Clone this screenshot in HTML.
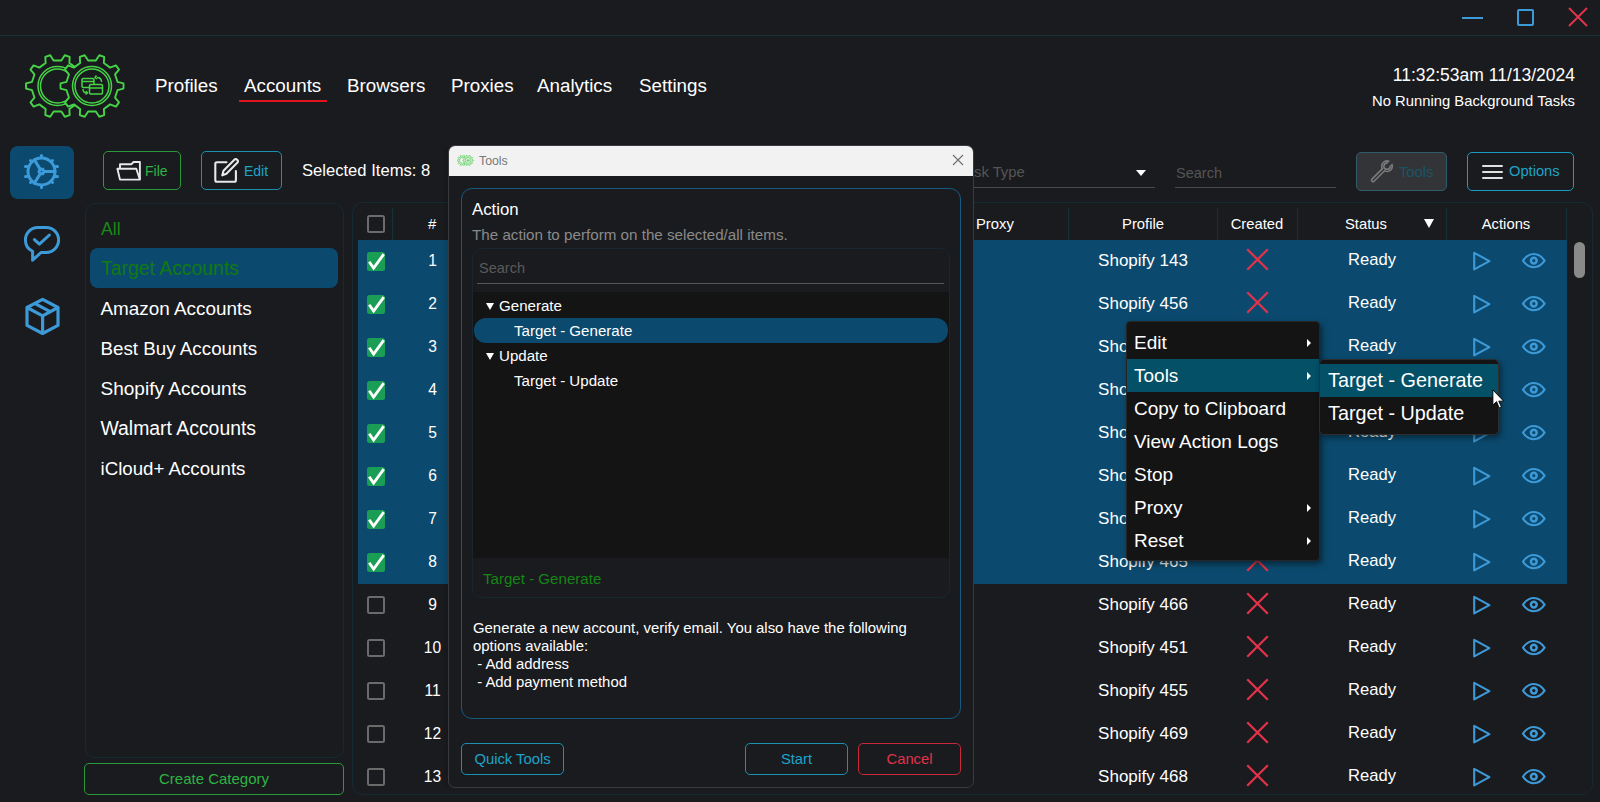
<!DOCTYPE html>
<html><head><meta charset="utf-8">
<style>
*{box-sizing:border-box;margin:0;padding:0}
html,body{width:1600px;height:802px;overflow:hidden;background:#1a1b1f;font-family:"Liberation Sans",sans-serif;color:#fff}
.a{position:absolute}
.t{position:absolute;white-space:nowrap;line-height:1}
.btn{position:absolute;border-radius:5px;border:1.5px solid}
</style></head><body>
<div class="a" style="left:0px;top:35px;width:1600px;height:1px;background:#17303c"></div>
<div class="a" style="left:1462px;top:16.5px;width:21px;height:2px;background:#3d9ad8"></div>
<div class="a" style="left:1517px;top:9px;width:17px;height:17px;border:2px solid #3d9ad8;border-radius:2px"></div>
<svg class="a" style="left:1568px;top:7px" width="20" height="20"><path d="M1 1L19 19M19 1L1 19" stroke="#e0334a" stroke-width="2"/></svg>
<svg class="a" style="left:20px;top:45px" width="115" height="80" viewBox="0 0 115 80">
<g stroke="#46d446" fill="none" stroke-width="1.9" stroke-linejoin="round">
<path d="M62.96 45.20 L68.99 43.58 L68.99 38.42 L62.96 36.80 L60.56 29.43 L64.50 24.57 L61.46 20.40 L55.63 22.64 L49.36 18.09 L49.68 11.84 L44.78 10.25 L41.38 15.49 L33.62 15.49 L30.22 10.25 L25.32 11.84 L25.64 18.09 L19.37 22.64 L13.54 20.40 L10.50 24.57 L14.44 29.43 L12.04 36.80 L6.01 38.42 L6.01 43.58 L12.04 45.20 L14.44 52.57 L10.50 57.43 L13.54 61.60 L19.37 59.36 L25.64 63.91 L25.32 70.16 L30.22 71.75 L33.62 66.51 L41.38 66.51 L44.78 71.75 L49.68 70.16 L49.36 63.91 L55.63 59.36 L61.46 61.60 L64.50 57.43 L60.56 52.57Z"/>
<circle cx="37.5" cy="41" r="19.5" stroke-width="1.5"/><circle cx="37.5" cy="41" r="17" stroke-width="1.5"/>
<path d="M97.46 45.20 L103.49 43.58 L103.49 38.42 L97.46 36.80 L95.06 29.43 L99.00 24.57 L95.96 20.40 L90.13 22.64 L83.86 18.09 L84.18 11.84 L79.28 10.25 L75.88 15.49 L68.12 15.49 L64.72 10.25 L59.82 11.84 L60.14 18.09 L53.87 22.64 L48.04 20.40 L45.00 24.57 L48.94 29.43 L46.54 36.80 L40.51 38.42 L40.51 43.58 L46.54 45.20 L48.94 52.57 L45.00 57.43 L48.04 61.60 L53.87 59.36 L60.14 63.91 L59.82 70.16 L64.72 71.75 L68.12 66.51 L75.88 66.51 L79.28 71.75 L84.18 70.16 L83.86 63.91 L90.13 59.36 L95.96 61.60 L99.00 57.43 L95.06 52.57Z" fill="#1a1b1f"/>
<circle cx="72" cy="41" r="19.5" stroke-width="1.5"/><circle cx="72" cy="41" r="17" stroke-width="1.5"/>
<g stroke-width="1.5">
<rect x="62" y="33.5" width="12" height="9" rx="1.2"/><path d="M62 36.5h12"/>
<rect x="69.5" y="39.5" width="13" height="9.5" rx="1.2" fill="#1a1b1f"/><path d="M69.5 43h13"/>
<path d="M77 32.5c2.5 0 4.5 1.5 4.5 4.5"/><path d="M76.5 30.5l-1.5 2 2 1.5"/>
<path d="M63 44c0 2.5 1.5 4 4 4"/><path d="M66 46l1.5 2-2 1.5"/>
</g></g></svg>
<div class="t" style="left:155px;top:76.59px;font-size:18.8px;color:#fff;">Profiles</div>
<div class="t" style="left:244px;top:76.59px;font-size:18.8px;color:#fff;">Accounts</div>
<div class="t" style="left:347px;top:76.59px;font-size:18.8px;color:#fff;">Browsers</div>
<div class="t" style="left:451px;top:76.59px;font-size:18.8px;color:#fff;">Proxies</div>
<div class="t" style="left:537px;top:76.59px;font-size:18.8px;color:#fff;">Analytics</div>
<div class="t" style="left:639px;top:76.59px;font-size:18.8px;color:#fff;">Settings</div>
<div class="a" style="left:239px;top:100px;width:88px;height:2px;background:#e0141e"></div>
<div class="t" style="right:25px;top:67.39px;font-size:17.5px;color:#fff;">11:32:53am 11/13/2024</div>
<div class="t" style="right:25px;top:93.67px;font-size:14.8px;color:#fff;">No Running Background Tasks</div>
<div class="a" style="left:10px;top:146px;width:64px;height:53px;background:#0b4a6e;border-radius:8px"></div>
<svg class="a" style="left:21px;top:151px" width="42" height="42" viewBox="0 0 42 42">
 <g stroke="#3d9ad8" stroke-width="3" fill="none" stroke-linecap="round">
  <circle cx="20.5" cy="20.5" r="13.5"/>
  <path d="M20.5 4.5v2M20.5 34.5v2M9.5 9.5l1 1M31.5 9.5l-1 1M9.5 31.5l1-1M31.5 31.5l-1-1M4.5 15.5h2M4.5 25.5h2M36.5 15.5h-2M36.5 25.5h-2"/>
  <path d="M23 20.5h11M19.3 18.4l-6-9.7M19.3 22.6l-6 9.7"/>
  <path d="M18 20.5l1.3-2.2h2.5l1.3 2.2-1.3 2.2h-2.5z"/>
 </g></svg>
<svg class="a" style="left:22px;top:224px" width="40" height="40" viewBox="0 0 40 40">
 <g stroke="#3d9ad8" stroke-width="3" fill="none" stroke-linecap="round" stroke-linejoin="round">
  <path d="M19 28.5H24A12.5 12.5 0 0 0 36.6 16V15.9A12.4 12.4 0 0 0 24.2 3.5H15.8A12.4 12.4 0 0 0 3.4 15.9V16A12.5 12.5 0 0 0 10.6 27.3V36.2Z"/>
  <path d="M12.4 15.6l5 4.6 10-9.2"/>
 </g></svg>
<svg class="a" style="left:22px;top:296px" width="40" height="40" viewBox="0 0 40 40">
 <g stroke="#3d9ad8" stroke-width="3.2" fill="none" stroke-linejoin="round">
  <path d="M20.6 3.4L36 11.5V29.4L20.6 37.5 5 29.4V11.5z"/>
  <path d="M5 11.5L20.6 19.8 36 11.5M20.6 19.8V37.5M12.6 7.4l15.6 8.2"/>
 </g></svg>
<div class="btn" style="left:103px;top:151px;width:78px;height:39px;border-color:#2a9a3a"></div>
<svg class="a" style="left:115px;top:159px" width="28" height="24" viewBox="0 0 28 24">
 <g stroke="#e8e8e8" stroke-width="1.9" fill="none" stroke-linejoin="round">
  <path d="M5 9.5V5.2h11.5L18.5 3h6.4v17.6"/><path d="M2.4 9.7h18.9l3.6 10.9H5z"/>
 </g></svg>
<div class="t" style="left:145px;top:164.35px;font-size:14px;color:#2fb344;">File</div>
<div class="btn" style="left:201px;top:151px;width:81px;height:39px;border-color:#1a8fb0"></div>
<svg class="a" style="left:213px;top:157px" width="28" height="28" viewBox="0 0 28 28">
 <g stroke="#e8e8e8" stroke-width="2.1" fill="none" stroke-linejoin="round" stroke-linecap="round">
  <path d="M13.5 5.2H3.8a1.5 1.5 0 0 0-1.5 1.5v16.6a1.5 1.5 0 0 0 1.5 1.5h17.6a1.5 1.5 0 0 0 1.5-1.5V14"/><path d="M9.3 18.3l1.2-4.6L21.6 2.6a1.6 1.6 0 0 1 2.3 0l.6.6a1.6 1.6 0 0 1 0 2.3L13.4 16.7z"/>
 </g></svg>
<div class="t" style="left:244px;top:164.35px;font-size:14px;color:#1fa3c9;">Edit</div>
<div class="t" style="left:302px;top:162.75px;font-size:16.6px;color:#fff;">Selected Items: 8</div>
<div class="t" style="left:974px;top:165.47px;font-size:14.8px;color:#555555;">sk Type</div>
<div class="a" style="left:1136px;top:170px;width:0px;height:0px;border-top:6px solid #fff;border-left:5px solid transparent;border-right:5px solid transparent"></div>
<div class="a" style="left:955px;top:187px;width:200px;height:1px;background:#4a4a4a"></div>
<div class="t" style="left:1176px;top:165.73px;font-size:14.5px;color:#555555;">Search</div>
<div class="a" style="left:1175px;top:187px;width:161px;height:1px;background:#4a4a4a"></div>
<div class="btn" style="left:1356px;top:152px;width:91px;height:39px;background:#333438;border-color:#2f5c68"></div>
<svg class="a" style="left:1368px;top:158px" width="28" height="28" viewBox="0 0 28 28">
 <defs>
  <mask id="wo"><rect width="28" height="28" fill="#000"/><circle cx="19" cy="8.2" r="6.1" fill="#fff"/><path d="M19 8.2L5 22.2" stroke="#fff" stroke-width="4.6" stroke-linecap="round"/><circle cx="19" cy="8.2" r="2.3" fill="#000"/><path d="M19 8.2L26 1.2" stroke="#000" stroke-width="3.4"/></mask>
  <mask id="wi"><rect width="28" height="28" fill="#000"/><circle cx="19" cy="8.2" r="4.5" fill="#fff"/><path d="M19 8.2L5 22.2" stroke="#fff" stroke-width="1.4" stroke-linecap="round"/><circle cx="19" cy="8.2" r="3.9" fill="#000"/><path d="M19 8.2L26 1.2" stroke="#000" stroke-width="6.6"/></mask>
 </defs>
 <rect width="28" height="28" fill="#7a7a7a" mask="url(#wo)"/>
 <rect width="28" height="28" fill="#333438" mask="url(#wi)"/>
</svg>
<div class="t" style="left:1399px;top:165.16px;font-size:14.7px;color:#1a5566;">Tools</div>
<div class="btn" style="left:1467px;top:152px;width:107px;height:39px;border-color:#1a9bbf"></div>
<div class="a" style="left:1482px;top:164.5px;width:21px;height:2px;background:#e0e0e0;border-radius:1px"></div>
<div class="a" style="left:1482px;top:170.7px;width:21px;height:2px;background:#e0e0e0;border-radius:1px"></div>
<div class="a" style="left:1482px;top:177px;width:21px;height:2px;background:#e0e0e0;border-radius:1px"></div>
<div class="t" style="left:1509px;top:164.36px;font-size:14.7px;color:#1fa3c9;">Options</div>
<div class="a" style="left:85px;top:203px;width:259px;height:555px;border:1px solid #152a33;border-radius:10px"></div>
<div class="t" style="left:101px;top:220.60px;font-size:17.6px;color:#188818;">All</div>
<div class="a" style="left:90px;top:248px;width:248px;height:40px;background:#0b4a6e;border-radius:8px"></div>
<div class="t" style="left:101px;top:259.08px;font-size:19.4px;color:#117a11;">Target Accounts</div>
<div class="t" style="left:100.5px;top:299.50px;font-size:18.9px;color:#fff;">Amazon Accounts</div>
<div class="t" style="left:100.5px;top:339.59px;font-size:18.8px;color:#fff;">Best Buy Accounts</div>
<div class="t" style="left:100.5px;top:379.37px;font-size:19.05px;color:#fff;">Shopify Accounts</div>
<div class="t" style="left:100.5px;top:419.08px;font-size:19.4px;color:#fff;">Walmart Accounts</div>
<div class="t" style="left:100.5px;top:459.67px;font-size:18.7px;color:#fff;">iCloud+ Accounts</div>
<div class="btn" style="left:84px;top:763px;width:260px;height:32px;border-color:#2a9a3a"></div>
<div class="t" style="left:84px;width:260px;text-align:center;top:770.70px;font-size:15px;color:#2fb344;">Create Category</div>
<div class="a" style="left:352px;top:202px;width:1241px;height:593px;border:1px solid #152a33;border-radius:11px"></div>
<div class="a" style="left:367px;top:215px;width:18px;height:17.5px;border-radius:2.5px;border:2px solid #6b6b6b"></div>
<div class="a" style="left:391.7px;top:208px;width:1.6px;height:32px;background:#14303b"></div>
<div class="a" style="left:1067.7px;top:208px;width:1.6px;height:32px;background:#14303b"></div>
<div class="a" style="left:1216.7px;top:208px;width:1.6px;height:32px;background:#14303b"></div>
<div class="a" style="left:1296.7px;top:208px;width:1.6px;height:32px;background:#14303b"></div>
<div class="a" style="left:1445.7px;top:208px;width:1.6px;height:32px;background:#14303b"></div>
<div class="a" style="left:1565.7px;top:208px;width:1.6px;height:32px;background:#14303b"></div>
<div class="t" style="left:428px;top:217.07px;font-size:14.8px;color:#fff;">#</div>
<div class="t" style="left:976px;top:217.07px;font-size:14.8px;color:#fff;">Proxy</div>
<div class="t" style="left:1068px;width:150px;text-align:center;top:217.07px;font-size:14.8px;color:#fff;">Profile</div>
<div class="t" style="left:1217px;width:80px;text-align:center;top:217.07px;font-size:14.8px;color:#fff;">Created</div>
<div class="t" style="left:1345px;top:217.07px;font-size:14.8px;color:#fff;">Status</div>
<div class="a" style="left:1424px;top:219px;width:0px;height:0px;border-top:9px solid #fff;border-left:5.5px solid transparent;border-right:5.5px solid transparent"></div>
<div class="t" style="left:1446px;width:120px;text-align:center;top:217.07px;font-size:14.8px;color:#fff;">Actions</div>
<div class="a" style="left:1574px;top:242px;width:11px;height:36px;background:#8a8a8a;border-radius:6px"></div>
<div class="a" style="left:358px;top:240px;width:1209px;height:43px;background:#0b4a6e"></div>
<div class="a" style="left:367px;top:252px;width:18px;height:19px;border-radius:2.5px;background:#1a9e55"><svg width="18" height="19" viewBox="0 0 18 19" style="position:absolute;left:0;top:0"><path d="M2.2 9.8l4.4 6.2L16.8 2.2" stroke="#fff" stroke-width="2.8" fill="none"/></svg></div>
<div class="t" style="left:402.5px;width:60px;text-align:center;top:253.29px;font-size:15.6px;color:#fff;">1</div>
<div class="t" style="left:1068px;width:150px;text-align:center;top:252.01px;font-size:17px;color:#fff;">Shopify 143</div>
<svg class="a" style="left:1246px;top:248px" width="23" height="23"><path d="M1.2 1.2L21.8 21.8M21.8 1.2L1.2 21.8" stroke="#e0334a" stroke-width="2.3"/></svg>
<div class="t" style="left:1348px;top:252.35px;font-size:16.6px;color:#fff;">Ready</div>
<svg class="a" style="left:1472px;top:250.5px" width="20" height="20" viewBox="0 0 20 20"><path d="M2.2 1.8v16.6L17.4 10.1z" stroke="#3d9ad8" stroke-width="2.1" fill="none" stroke-linejoin="round"/></svg>
<svg class="a" style="left:1521px;top:252px" width="26" height="18" viewBox="0 0 26 18"><path d="M2 8.6C5 4.2 8.8 2 12.8 2S20.6 4.2 23.6 8.6C20.6 13 16.8 15.2 12.8 15.2S5 13 2 8.6z" stroke="#3d9ad8" stroke-width="2.1" fill="none" stroke-linejoin="round"/><circle cx="12.8" cy="8.6" r="2.9" stroke="#3d9ad8" stroke-width="2.5" fill="none"/></svg>
<div class="a" style="left:358px;top:283px;width:1209px;height:43px;background:#0b4a6e"></div>
<div class="a" style="left:367px;top:295px;width:18px;height:19px;border-radius:2.5px;background:#1a9e55"><svg width="18" height="19" viewBox="0 0 18 19" style="position:absolute;left:0;top:0"><path d="M2.2 9.8l4.4 6.2L16.8 2.2" stroke="#fff" stroke-width="2.8" fill="none"/></svg></div>
<div class="t" style="left:402.5px;width:60px;text-align:center;top:296.29px;font-size:15.6px;color:#fff;">2</div>
<div class="t" style="left:1068px;width:150px;text-align:center;top:295.01px;font-size:17px;color:#fff;">Shopify 456</div>
<svg class="a" style="left:1246px;top:291px" width="23" height="23"><path d="M1.2 1.2L21.8 21.8M21.8 1.2L1.2 21.8" stroke="#e0334a" stroke-width="2.3"/></svg>
<div class="t" style="left:1348px;top:295.35px;font-size:16.6px;color:#fff;">Ready</div>
<svg class="a" style="left:1472px;top:293.5px" width="20" height="20" viewBox="0 0 20 20"><path d="M2.2 1.8v16.6L17.4 10.1z" stroke="#3d9ad8" stroke-width="2.1" fill="none" stroke-linejoin="round"/></svg>
<svg class="a" style="left:1521px;top:295px" width="26" height="18" viewBox="0 0 26 18"><path d="M2 8.6C5 4.2 8.8 2 12.8 2S20.6 4.2 23.6 8.6C20.6 13 16.8 15.2 12.8 15.2S5 13 2 8.6z" stroke="#3d9ad8" stroke-width="2.1" fill="none" stroke-linejoin="round"/><circle cx="12.8" cy="8.6" r="2.9" stroke="#3d9ad8" stroke-width="2.5" fill="none"/></svg>
<div class="a" style="left:358px;top:326px;width:1209px;height:43px;background:#0b4a6e"></div>
<div class="a" style="left:367px;top:338px;width:18px;height:19px;border-radius:2.5px;background:#1a9e55"><svg width="18" height="19" viewBox="0 0 18 19" style="position:absolute;left:0;top:0"><path d="M2.2 9.8l4.4 6.2L16.8 2.2" stroke="#fff" stroke-width="2.8" fill="none"/></svg></div>
<div class="t" style="left:402.5px;width:60px;text-align:center;top:339.29px;font-size:15.6px;color:#fff;">3</div>
<div class="t" style="left:1068px;width:150px;text-align:center;top:338.01px;font-size:17px;color:#fff;">Shopify 458</div>
<svg class="a" style="left:1246px;top:334px" width="23" height="23"><path d="M1.2 1.2L21.8 21.8M21.8 1.2L1.2 21.8" stroke="#e0334a" stroke-width="2.3"/></svg>
<div class="t" style="left:1348px;top:338.35px;font-size:16.6px;color:#fff;">Ready</div>
<svg class="a" style="left:1472px;top:336.5px" width="20" height="20" viewBox="0 0 20 20"><path d="M2.2 1.8v16.6L17.4 10.1z" stroke="#3d9ad8" stroke-width="2.1" fill="none" stroke-linejoin="round"/></svg>
<svg class="a" style="left:1521px;top:338px" width="26" height="18" viewBox="0 0 26 18"><path d="M2 8.6C5 4.2 8.8 2 12.8 2S20.6 4.2 23.6 8.6C20.6 13 16.8 15.2 12.8 15.2S5 13 2 8.6z" stroke="#3d9ad8" stroke-width="2.1" fill="none" stroke-linejoin="round"/><circle cx="12.8" cy="8.6" r="2.9" stroke="#3d9ad8" stroke-width="2.5" fill="none"/></svg>
<div class="a" style="left:358px;top:369px;width:1209px;height:43px;background:#0b4a6e"></div>
<div class="a" style="left:367px;top:381px;width:18px;height:19px;border-radius:2.5px;background:#1a9e55"><svg width="18" height="19" viewBox="0 0 18 19" style="position:absolute;left:0;top:0"><path d="M2.2 9.8l4.4 6.2L16.8 2.2" stroke="#fff" stroke-width="2.8" fill="none"/></svg></div>
<div class="t" style="left:402.5px;width:60px;text-align:center;top:382.29px;font-size:15.6px;color:#fff;">4</div>
<div class="t" style="left:1068px;width:150px;text-align:center;top:381.01px;font-size:17px;color:#fff;">Shopify 461</div>
<svg class="a" style="left:1246px;top:377px" width="23" height="23"><path d="M1.2 1.2L21.8 21.8M21.8 1.2L1.2 21.8" stroke="#e0334a" stroke-width="2.3"/></svg>
<div class="t" style="left:1348px;top:381.35px;font-size:16.6px;color:#fff;">Ready</div>
<svg class="a" style="left:1472px;top:379.5px" width="20" height="20" viewBox="0 0 20 20"><path d="M2.2 1.8v16.6L17.4 10.1z" stroke="#3d9ad8" stroke-width="2.1" fill="none" stroke-linejoin="round"/></svg>
<svg class="a" style="left:1521px;top:381px" width="26" height="18" viewBox="0 0 26 18"><path d="M2 8.6C5 4.2 8.8 2 12.8 2S20.6 4.2 23.6 8.6C20.6 13 16.8 15.2 12.8 15.2S5 13 2 8.6z" stroke="#3d9ad8" stroke-width="2.1" fill="none" stroke-linejoin="round"/><circle cx="12.8" cy="8.6" r="2.9" stroke="#3d9ad8" stroke-width="2.5" fill="none"/></svg>
<div class="a" style="left:358px;top:412px;width:1209px;height:43px;background:#0b4a6e"></div>
<div class="a" style="left:367px;top:424px;width:18px;height:19px;border-radius:2.5px;background:#1a9e55"><svg width="18" height="19" viewBox="0 0 18 19" style="position:absolute;left:0;top:0"><path d="M2.2 9.8l4.4 6.2L16.8 2.2" stroke="#fff" stroke-width="2.8" fill="none"/></svg></div>
<div class="t" style="left:402.5px;width:60px;text-align:center;top:425.29px;font-size:15.6px;color:#fff;">5</div>
<div class="t" style="left:1068px;width:150px;text-align:center;top:424.01px;font-size:17px;color:#fff;">Shopify 462</div>
<svg class="a" style="left:1246px;top:420px" width="23" height="23"><path d="M1.2 1.2L21.8 21.8M21.8 1.2L1.2 21.8" stroke="#e0334a" stroke-width="2.3"/></svg>
<div class="t" style="left:1348px;top:424.35px;font-size:16.6px;color:#fff;">Ready</div>
<svg class="a" style="left:1472px;top:422.5px" width="20" height="20" viewBox="0 0 20 20"><path d="M2.2 1.8v16.6L17.4 10.1z" stroke="#3d9ad8" stroke-width="2.1" fill="none" stroke-linejoin="round"/></svg>
<svg class="a" style="left:1521px;top:424px" width="26" height="18" viewBox="0 0 26 18"><path d="M2 8.6C5 4.2 8.8 2 12.8 2S20.6 4.2 23.6 8.6C20.6 13 16.8 15.2 12.8 15.2S5 13 2 8.6z" stroke="#3d9ad8" stroke-width="2.1" fill="none" stroke-linejoin="round"/><circle cx="12.8" cy="8.6" r="2.9" stroke="#3d9ad8" stroke-width="2.5" fill="none"/></svg>
<div class="a" style="left:358px;top:455px;width:1209px;height:43px;background:#0b4a6e"></div>
<div class="a" style="left:367px;top:467px;width:18px;height:19px;border-radius:2.5px;background:#1a9e55"><svg width="18" height="19" viewBox="0 0 18 19" style="position:absolute;left:0;top:0"><path d="M2.2 9.8l4.4 6.2L16.8 2.2" stroke="#fff" stroke-width="2.8" fill="none"/></svg></div>
<div class="t" style="left:402.5px;width:60px;text-align:center;top:468.29px;font-size:15.6px;color:#fff;">6</div>
<div class="t" style="left:1068px;width:150px;text-align:center;top:467.01px;font-size:17px;color:#fff;">Shopify 463</div>
<svg class="a" style="left:1246px;top:463px" width="23" height="23"><path d="M1.2 1.2L21.8 21.8M21.8 1.2L1.2 21.8" stroke="#e0334a" stroke-width="2.3"/></svg>
<div class="t" style="left:1348px;top:467.35px;font-size:16.6px;color:#fff;">Ready</div>
<svg class="a" style="left:1472px;top:465.5px" width="20" height="20" viewBox="0 0 20 20"><path d="M2.2 1.8v16.6L17.4 10.1z" stroke="#3d9ad8" stroke-width="2.1" fill="none" stroke-linejoin="round"/></svg>
<svg class="a" style="left:1521px;top:467px" width="26" height="18" viewBox="0 0 26 18"><path d="M2 8.6C5 4.2 8.8 2 12.8 2S20.6 4.2 23.6 8.6C20.6 13 16.8 15.2 12.8 15.2S5 13 2 8.6z" stroke="#3d9ad8" stroke-width="2.1" fill="none" stroke-linejoin="round"/><circle cx="12.8" cy="8.6" r="2.9" stroke="#3d9ad8" stroke-width="2.5" fill="none"/></svg>
<div class="a" style="left:358px;top:498px;width:1209px;height:43px;background:#0b4a6e"></div>
<div class="a" style="left:367px;top:510px;width:18px;height:19px;border-radius:2.5px;background:#1a9e55"><svg width="18" height="19" viewBox="0 0 18 19" style="position:absolute;left:0;top:0"><path d="M2.2 9.8l4.4 6.2L16.8 2.2" stroke="#fff" stroke-width="2.8" fill="none"/></svg></div>
<div class="t" style="left:402.5px;width:60px;text-align:center;top:511.29px;font-size:15.6px;color:#fff;">7</div>
<div class="t" style="left:1068px;width:150px;text-align:center;top:510.01px;font-size:17px;color:#fff;">Shopify 464</div>
<svg class="a" style="left:1246px;top:506px" width="23" height="23"><path d="M1.2 1.2L21.8 21.8M21.8 1.2L1.2 21.8" stroke="#e0334a" stroke-width="2.3"/></svg>
<div class="t" style="left:1348px;top:510.35px;font-size:16.6px;color:#fff;">Ready</div>
<svg class="a" style="left:1472px;top:508.5px" width="20" height="20" viewBox="0 0 20 20"><path d="M2.2 1.8v16.6L17.4 10.1z" stroke="#3d9ad8" stroke-width="2.1" fill="none" stroke-linejoin="round"/></svg>
<svg class="a" style="left:1521px;top:510px" width="26" height="18" viewBox="0 0 26 18"><path d="M2 8.6C5 4.2 8.8 2 12.8 2S20.6 4.2 23.6 8.6C20.6 13 16.8 15.2 12.8 15.2S5 13 2 8.6z" stroke="#3d9ad8" stroke-width="2.1" fill="none" stroke-linejoin="round"/><circle cx="12.8" cy="8.6" r="2.9" stroke="#3d9ad8" stroke-width="2.5" fill="none"/></svg>
<div class="a" style="left:358px;top:541px;width:1209px;height:43px;background:#0b4a6e"></div>
<div class="a" style="left:367px;top:553px;width:18px;height:19px;border-radius:2.5px;background:#1a9e55"><svg width="18" height="19" viewBox="0 0 18 19" style="position:absolute;left:0;top:0"><path d="M2.2 9.8l4.4 6.2L16.8 2.2" stroke="#fff" stroke-width="2.8" fill="none"/></svg></div>
<div class="t" style="left:402.5px;width:60px;text-align:center;top:554.29px;font-size:15.6px;color:#fff;">8</div>
<div class="t" style="left:1068px;width:150px;text-align:center;top:553.01px;font-size:17px;color:#fff;">Shopify 465</div>
<svg class="a" style="left:1246px;top:549px" width="23" height="23"><path d="M1.2 1.2L21.8 21.8M21.8 1.2L1.2 21.8" stroke="#e0334a" stroke-width="2.3"/></svg>
<div class="t" style="left:1348px;top:553.35px;font-size:16.6px;color:#fff;">Ready</div>
<svg class="a" style="left:1472px;top:551.5px" width="20" height="20" viewBox="0 0 20 20"><path d="M2.2 1.8v16.6L17.4 10.1z" stroke="#3d9ad8" stroke-width="2.1" fill="none" stroke-linejoin="round"/></svg>
<svg class="a" style="left:1521px;top:553px" width="26" height="18" viewBox="0 0 26 18"><path d="M2 8.6C5 4.2 8.8 2 12.8 2S20.6 4.2 23.6 8.6C20.6 13 16.8 15.2 12.8 15.2S5 13 2 8.6z" stroke="#3d9ad8" stroke-width="2.1" fill="none" stroke-linejoin="round"/><circle cx="12.8" cy="8.6" r="2.9" stroke="#3d9ad8" stroke-width="2.5" fill="none"/></svg>
<div class="a" style="left:367px;top:596px;width:18px;height:18px;border-radius:2.5px;border:2px solid #6b6b6b"></div>
<div class="t" style="left:402.5px;width:60px;text-align:center;top:597.29px;font-size:15.6px;color:#fff;">9</div>
<div class="t" style="left:1068px;width:150px;text-align:center;top:596.01px;font-size:17px;color:#fff;">Shopify 466</div>
<svg class="a" style="left:1246px;top:592px" width="23" height="23"><path d="M1.2 1.2L21.8 21.8M21.8 1.2L1.2 21.8" stroke="#e0334a" stroke-width="2.3"/></svg>
<div class="t" style="left:1348px;top:596.35px;font-size:16.6px;color:#fff;">Ready</div>
<svg class="a" style="left:1472px;top:594.5px" width="20" height="20" viewBox="0 0 20 20"><path d="M2.2 1.8v16.6L17.4 10.1z" stroke="#3d9ad8" stroke-width="2.1" fill="none" stroke-linejoin="round"/></svg>
<svg class="a" style="left:1521px;top:596px" width="26" height="18" viewBox="0 0 26 18"><path d="M2 8.6C5 4.2 8.8 2 12.8 2S20.6 4.2 23.6 8.6C20.6 13 16.8 15.2 12.8 15.2S5 13 2 8.6z" stroke="#3d9ad8" stroke-width="2.1" fill="none" stroke-linejoin="round"/><circle cx="12.8" cy="8.6" r="2.9" stroke="#3d9ad8" stroke-width="2.5" fill="none"/></svg>
<div class="a" style="left:367px;top:639px;width:18px;height:18px;border-radius:2.5px;border:2px solid #6b6b6b"></div>
<div class="t" style="left:402.5px;width:60px;text-align:center;top:640.29px;font-size:15.6px;color:#fff;">10</div>
<div class="t" style="left:1068px;width:150px;text-align:center;top:639.01px;font-size:17px;color:#fff;">Shopify 451</div>
<svg class="a" style="left:1246px;top:635px" width="23" height="23"><path d="M1.2 1.2L21.8 21.8M21.8 1.2L1.2 21.8" stroke="#e0334a" stroke-width="2.3"/></svg>
<div class="t" style="left:1348px;top:639.35px;font-size:16.6px;color:#fff;">Ready</div>
<svg class="a" style="left:1472px;top:637.5px" width="20" height="20" viewBox="0 0 20 20"><path d="M2.2 1.8v16.6L17.4 10.1z" stroke="#3d9ad8" stroke-width="2.1" fill="none" stroke-linejoin="round"/></svg>
<svg class="a" style="left:1521px;top:639px" width="26" height="18" viewBox="0 0 26 18"><path d="M2 8.6C5 4.2 8.8 2 12.8 2S20.6 4.2 23.6 8.6C20.6 13 16.8 15.2 12.8 15.2S5 13 2 8.6z" stroke="#3d9ad8" stroke-width="2.1" fill="none" stroke-linejoin="round"/><circle cx="12.8" cy="8.6" r="2.9" stroke="#3d9ad8" stroke-width="2.5" fill="none"/></svg>
<div class="a" style="left:367px;top:682px;width:18px;height:18px;border-radius:2.5px;border:2px solid #6b6b6b"></div>
<div class="t" style="left:402.5px;width:60px;text-align:center;top:683.29px;font-size:15.6px;color:#fff;">11</div>
<div class="t" style="left:1068px;width:150px;text-align:center;top:682.01px;font-size:17px;color:#fff;">Shopify 455</div>
<svg class="a" style="left:1246px;top:678px" width="23" height="23"><path d="M1.2 1.2L21.8 21.8M21.8 1.2L1.2 21.8" stroke="#e0334a" stroke-width="2.3"/></svg>
<div class="t" style="left:1348px;top:682.35px;font-size:16.6px;color:#fff;">Ready</div>
<svg class="a" style="left:1472px;top:680.5px" width="20" height="20" viewBox="0 0 20 20"><path d="M2.2 1.8v16.6L17.4 10.1z" stroke="#3d9ad8" stroke-width="2.1" fill="none" stroke-linejoin="round"/></svg>
<svg class="a" style="left:1521px;top:682px" width="26" height="18" viewBox="0 0 26 18"><path d="M2 8.6C5 4.2 8.8 2 12.8 2S20.6 4.2 23.6 8.6C20.6 13 16.8 15.2 12.8 15.2S5 13 2 8.6z" stroke="#3d9ad8" stroke-width="2.1" fill="none" stroke-linejoin="round"/><circle cx="12.8" cy="8.6" r="2.9" stroke="#3d9ad8" stroke-width="2.5" fill="none"/></svg>
<div class="a" style="left:367px;top:725px;width:18px;height:18px;border-radius:2.5px;border:2px solid #6b6b6b"></div>
<div class="t" style="left:402.5px;width:60px;text-align:center;top:726.29px;font-size:15.6px;color:#fff;">12</div>
<div class="t" style="left:1068px;width:150px;text-align:center;top:725.01px;font-size:17px;color:#fff;">Shopify 469</div>
<svg class="a" style="left:1246px;top:721px" width="23" height="23"><path d="M1.2 1.2L21.8 21.8M21.8 1.2L1.2 21.8" stroke="#e0334a" stroke-width="2.3"/></svg>
<div class="t" style="left:1348px;top:725.35px;font-size:16.6px;color:#fff;">Ready</div>
<svg class="a" style="left:1472px;top:723.5px" width="20" height="20" viewBox="0 0 20 20"><path d="M2.2 1.8v16.6L17.4 10.1z" stroke="#3d9ad8" stroke-width="2.1" fill="none" stroke-linejoin="round"/></svg>
<svg class="a" style="left:1521px;top:725px" width="26" height="18" viewBox="0 0 26 18"><path d="M2 8.6C5 4.2 8.8 2 12.8 2S20.6 4.2 23.6 8.6C20.6 13 16.8 15.2 12.8 15.2S5 13 2 8.6z" stroke="#3d9ad8" stroke-width="2.1" fill="none" stroke-linejoin="round"/><circle cx="12.8" cy="8.6" r="2.9" stroke="#3d9ad8" stroke-width="2.5" fill="none"/></svg>
<div class="a" style="left:367px;top:768px;width:18px;height:18px;border-radius:2.5px;border:2px solid #6b6b6b"></div>
<div class="t" style="left:402.5px;width:60px;text-align:center;top:769.29px;font-size:15.6px;color:#fff;">13</div>
<div class="t" style="left:1068px;width:150px;text-align:center;top:768.01px;font-size:17px;color:#fff;">Shopify 468</div>
<svg class="a" style="left:1246px;top:764px" width="23" height="23"><path d="M1.2 1.2L21.8 21.8M21.8 1.2L1.2 21.8" stroke="#e0334a" stroke-width="2.3"/></svg>
<div class="t" style="left:1348px;top:768.35px;font-size:16.6px;color:#fff;">Ready</div>
<svg class="a" style="left:1472px;top:766.5px" width="20" height="20" viewBox="0 0 20 20"><path d="M2.2 1.8v16.6L17.4 10.1z" stroke="#3d9ad8" stroke-width="2.1" fill="none" stroke-linejoin="round"/></svg>
<svg class="a" style="left:1521px;top:768px" width="26" height="18" viewBox="0 0 26 18"><path d="M2 8.6C5 4.2 8.8 2 12.8 2S20.6 4.2 23.6 8.6C20.6 13 16.8 15.2 12.8 15.2S5 13 2 8.6z" stroke="#3d9ad8" stroke-width="2.1" fill="none" stroke-linejoin="round"/><circle cx="12.8" cy="8.6" r="2.9" stroke="#3d9ad8" stroke-width="2.5" fill="none"/></svg>
<div class="a" style="left:440px;top:146px;width:8px;height:642px;background:linear-gradient(to right,rgba(0,0,0,0),rgba(0,0,0,.12))"></div>
<div class="a" style="left:448px;top:145px;width:526px;height:643px;background:#1a1b1f;border:1px solid #3a3b3f;border-radius:7px;overflow:hidden"><div class="a" style="left:0;top:0;width:524px;height:30px;background:#f2f2f2"></div></div>
<svg class="a" style="left:457px;top:154.5px" width="16.5" height="11" viewBox="4 8 101 67"><g stroke="#5fd05f" fill="none" stroke-width="5" stroke-linejoin="round"><path d="M62.96 45.20 L68.99 43.58 L68.99 38.42 L62.96 36.80 L60.56 29.43 L64.50 24.57 L61.46 20.40 L55.63 22.64 L49.36 18.09 L49.68 11.84 L44.78 10.25 L41.38 15.49 L33.62 15.49 L30.22 10.25 L25.32 11.84 L25.64 18.09 L19.37 22.64 L13.54 20.40 L10.50 24.57 L14.44 29.43 L12.04 36.80 L6.01 38.42 L6.01 43.58 L12.04 45.20 L14.44 52.57 L10.50 57.43 L13.54 61.60 L19.37 59.36 L25.64 63.91 L25.32 70.16 L30.22 71.75 L33.62 66.51 L41.38 66.51 L44.78 71.75 L49.68 70.16 L49.36 63.91 L55.63 59.36 L61.46 61.60 L64.50 57.43 L60.56 52.57Z"/><circle cx="37.5" cy="41" r="18" stroke-width="5"/><path d="M97.46 45.20 L103.49 43.58 L103.49 38.42 L97.46 36.80 L95.06 29.43 L99.00 24.57 L95.96 20.40 L90.13 22.64 L83.86 18.09 L84.18 11.84 L79.28 10.25 L75.88 15.49 L68.12 15.49 L64.72 10.25 L59.82 11.84 L60.14 18.09 L53.87 22.64 L48.04 20.40 L45.00 24.57 L48.94 29.43 L46.54 36.80 L40.51 38.42 L40.51 43.58 L46.54 45.20 L48.94 52.57 L45.00 57.43 L48.04 61.60 L53.87 59.36 L60.14 63.91 L59.82 70.16 L64.72 71.75 L68.12 66.51 L75.88 66.51 L79.28 71.75 L84.18 70.16 L83.86 63.91 L90.13 59.36 L95.96 61.60 L99.00 57.43 L95.06 52.57Z" fill="#f2f2f2"/><circle cx="72" cy="41" r="18" stroke-width="5"/><rect x="63" y="35" width="18" height="12" fill="#5fd05f" stroke="none"/></g></svg>
<div class="t" style="left:479px;top:154.89px;font-size:12.3px;color:#787878;">Tools</div>
<svg class="a" style="left:951px;top:153px" width="14" height="14"><path d="M2 2L12 12M12 2L2 12" stroke="#6e6e6e" stroke-width="1.1"/></svg>
<div class="a" style="left:461px;top:188px;width:500px;height:531px;border:1.5px solid #155a80;border-radius:11px"></div>
<div class="t" style="left:472px;top:201.58px;font-size:16.8px;color:#fff;">Action</div>
<div class="t" style="left:472px;top:226.63px;font-size:15.2px;color:#8a8a8a;">The action to perform on the selected/all items.</div>
<div class="a" style="left:472px;top:248px;width:478px;height:350px;border:1px solid #172730;border-radius:10px;overflow:hidden"><div class="a" style="left:0;top:43px;width:476px;height:266px;background:#141414"></div></div>
<div class="t" style="left:479px;top:261.03px;font-size:14.5px;color:#5a5a5a;">Search</div>
<div class="a" style="left:477px;top:283px;width:467px;height:1px;background:#555"></div>
<div class="a" style="left:485.5px;top:302.5px;width:0px;height:0px;border-top:7px solid #fff;border-left:4.5px solid transparent;border-right:4.5px solid transparent"></div>
<div class="t" style="left:499px;top:298.32px;font-size:15.1px;color:#fff;">Generate</div>
<div class="a" style="left:474px;top:318px;width:474px;height:25px;background:#0b4a6e;border-radius:12px"></div>
<div class="t" style="left:514px;top:323.02px;font-size:15.1px;color:#fff;">Target - Generate</div>
<div class="a" style="left:485.5px;top:352.5px;width:0px;height:0px;border-top:7px solid #fff;border-left:4.5px solid transparent;border-right:4.5px solid transparent"></div>
<div class="t" style="left:499px;top:348.22px;font-size:15.1px;color:#fff;">Update</div>
<div class="t" style="left:514px;top:373.22px;font-size:15.1px;color:#fff;">Target - Update</div>
<div class="t" style="left:483px;top:571.22px;font-size:15.1px;color:#168516;">Target - Generate</div>
<div class="a" style="left:473px;top:619px;font-size:14.9px;line-height:18px;white-space:pre">Generate a new account, verify email. You also have the following
options available:
 - Add address
 - Add payment method</div>
<div class="btn" style="left:461px;top:743px;width:103px;height:32px;border-color:#1a8fb0"></div>
<div class="t" style="left:461px;width:103px;text-align:center;top:752.47px;font-size:14.8px;color:#1fa3c9;">Quick Tools</div>
<div class="btn" style="left:745px;top:743px;width:103px;height:32px;border-color:#1a8fb0"></div>
<div class="t" style="left:745px;width:103px;text-align:center;top:752.47px;font-size:14.8px;color:#1fa3c9;">Start</div>
<div class="btn" style="left:858px;top:743px;width:103px;height:32px;border-color:#c8283a"></div>
<div class="t" style="left:858px;width:103px;text-align:center;top:752.47px;font-size:14.8px;color:#e0334a;">Cancel</div>
<div class="a" style="left:1126px;top:321px;width:194px;height:240px;background:#141414;border:1px solid #262626;border-radius:4px;box-shadow:2px 3px 6px rgba(0,0,0,.5)"></div>
<div class="a" style="left:1127px;top:359px;width:192px;height:33px;background:#045066"></div>
<div class="t" style="left:1134px;top:333.02px;font-size:19px;color:#fff;">Edit</div>
<div class="a" style="left:1307px;top:338.5px;width:0px;height:0px;border-left:4px solid #fff;border-top:4px solid transparent;border-bottom:4px solid transparent"></div>
<div class="t" style="left:1134px;top:366.02px;font-size:19px;color:#fff;">Tools</div>
<div class="a" style="left:1307px;top:371.5px;width:0px;height:0px;border-left:4px solid #fff;border-top:4px solid transparent;border-bottom:4px solid transparent"></div>
<div class="t" style="left:1134px;top:399.02px;font-size:19px;color:#fff;">Copy to Clipboard</div>
<div class="t" style="left:1134px;top:432.02px;font-size:19px;color:#fff;">View Action Logs</div>
<div class="t" style="left:1134px;top:465.02px;font-size:19px;color:#fff;">Stop</div>
<div class="t" style="left:1134px;top:498.02px;font-size:19px;color:#fff;">Proxy</div>
<div class="a" style="left:1307px;top:503.5px;width:0px;height:0px;border-left:4px solid #fff;border-top:4px solid transparent;border-bottom:4px solid transparent"></div>
<div class="t" style="left:1134px;top:531.02px;font-size:19px;color:#fff;">Reset</div>
<div class="a" style="left:1307px;top:536.5px;width:0px;height:0px;border-left:4px solid #fff;border-top:4px solid transparent;border-bottom:4px solid transparent"></div>
<div class="a" style="left:1319px;top:359px;width:180px;height:76px;background:#141414;border:1px solid #2e2e2e;border-radius:5px;box-shadow:2px 3px 6px rgba(0,0,0,.45)"></div>
<div class="a" style="left:1320px;top:364px;width:178px;height:33px;background:#045066"></div>
<div class="t" style="left:1328px;top:371.24px;font-size:19.8px;color:#fff;">Target - Generate</div>
<div class="t" style="left:1328px;top:404.24px;font-size:19.8px;color:#fff;">Target - Update</div>
<svg class="a" style="left:1491.6px;top:389.4px" width="12.6" height="19.8" viewBox="0 0 14 22"><path d="M1 1v17l4-4 3 7 2.5-1-3-6.5h5.5z" fill="#fff" stroke="#000" stroke-width="1"/></svg>
</body></html>
